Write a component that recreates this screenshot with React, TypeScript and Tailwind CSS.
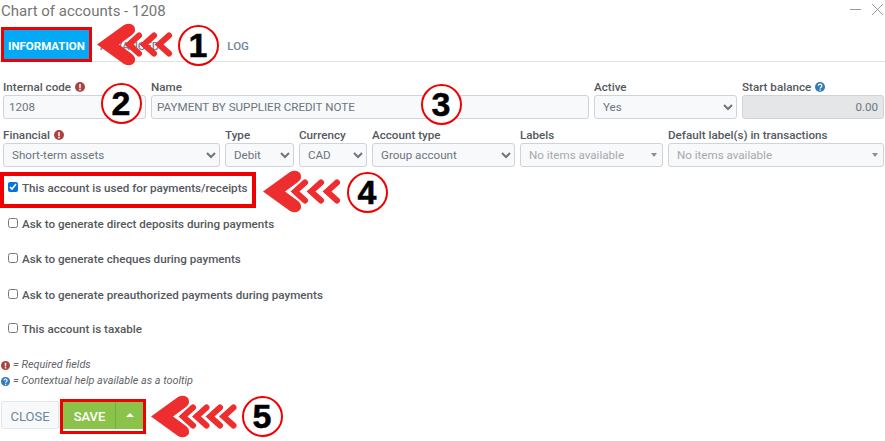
import React from "react";

const Excl = ({ c = "" }: { c?: string }) => (
  <svg viewBox="0 0 16 16" className={`inline-block w-[10px] h-[10px] ${c}`}>
    <circle cx="8" cy="8" r="8" fill="#a94442" />
    <rect x="6.8" y="3" width="2.4" height="6.6" rx="1" fill="#fff" />
    <circle cx="8" cy="12" r="1.5" fill="#fff" />
  </svg>
);
const Help = ({ c = "" }: { c?: string }) => (
  <svg viewBox="0 0 16 16" className={`inline-block w-[10px] h-[10px] ${c}`}>
    <circle cx="8" cy="8" r="8" fill="#337ab7" />
    <path d="M5.3 6.1a2.8 2.6 0 1 1 4.3 2.2c-1 .6-1.4 1-1.4 1.9" fill="none" stroke="#fff" strokeWidth="2" />
    <circle cx="8.2" cy="12.8" r="1.3" fill="#fff" />
  </svg>
);

const Label = ({ children }: { children: React.ReactNode }) => (
  <div className="h-[17px] pt-[1px] text-[11.65px] leading-[15px] text-[#55595e] font-medium whitespace-nowrap flex items-center gap-[4px]">
    {children}
  </div>
);

const fieldCls =
  "block w-full h-[24px] rounded-[3px] border border-[#ced4da] bg-[#f8f9fa] text-[11.6px] text-[#6c757d] outline-none";

const Sel = ({ label, w, value, icon }: { label: string; w: string; value: string; icon?: boolean }) => (
  <div className={`${w} shrink-0 flex flex-col`}>
    <Label>
      {label}
      {icon && <Excl />}
    </Label>
    <select defaultValue={value} className={`${fieldCls} pl-[4px]`}>
      <option>{value}</option>
    </select>
  </div>
);

const Empty = ({ label, w }: { label: string; w: string }) => (
  <div className={`${w} shrink-0 flex flex-col`}>
    <Label>{label}</Label>
    <div className={`${fieldCls} flex items-center justify-between pl-[8px] pr-[5px] text-[#a4a9ae]`}>
      <span className="translate-y-[1px]">No items available</span>
      <span className="w-0 h-0 border-x-[3.5px] border-x-transparent border-t-[4px] border-t-[#8a8f94]" />
    </div>
  </div>
);

const Check = ({ label, checked, h }: { label: string; checked?: boolean; h: string }) => (
  <label className={`flex items-center gap-[4px] ${h} pl-[8px] text-[11.65px] text-[#55595e] font-medium`}>
    <input type="checkbox" defaultChecked={checked} className="w-[10px] h-[10px] m-0 -translate-y-[1px] accent-[#0a6fd8]" />
    <span className="translate-y-[1px]">{label}</span>
  </label>
);

const Arrow = ({ x, y, w, n, s }: { x: number; y: number; w: number; n: number; s: number }) => (
  <svg
    className="absolute"
    style={{ left: x, top: y }}
    width={w}
    height={46}
    viewBox={`0 0 ${w} 46`}
    fill="none"
  >
    {Array.from({ length: n }).map((_, i) => {
      const t = 32 + i * s;
      return (
        <path
          key={i}
          d={`M${t + 10} 13.5 L${t} 22.5 L${t + 10} 31.5`}
          stroke="#ee2e2e"
          strokeWidth="6"
          strokeLinecap="round"
          strokeLinejoin="miter"
        />
      );
    })}
    <path
      d="M0 22.5 L27 3 Q33 0 37 4 Q40 9 35 13 L22 22.5 L35 32 Q40 36 37 41 Q33 45 27 42 Z"
      fill="#ee2e2e"
    />
  </svg>
);

const Circle = ({ x, y, n }: { x: number; y: number; n: string }) => (
  <div
    className="absolute w-[41px] h-[41px] rounded-full bg-white border-[2px] border-[#f00000] flex items-center justify-center text-[34px] font-bold text-black leading-none [-webkit-text-stroke:0.5px_black] [font-family:'Liberation_Sans',sans-serif]"
    style={{ left: x - 20.5, top: y - 20.5 }}
  >
    {n}
  </div>
);

const RedBox = ({ x, y, w, h, b }: { x: number; y: number; w: number; h: number; b: number }) => (
  <div
    className="absolute border-solid border-[#f00000]"
    style={{ left: x, top: y, width: w, height: h, borderWidth: b }}
  />
);

export default function App() {
  return (
    <div className="relative w-[885px] h-[441px] overflow-hidden bg-white [font-family:Roboto,sans-serif]">
      <div className="flex items-center justify-between h-[21px] pl-[1px] pr-[2px]">
        <div className="text-[15px] leading-[21px] pt-[1px] text-[#757575]">Chart of accounts - 1208</div>
        <div className="flex items-center gap-[11px] pb-[3px]">
          <span className="w-[11px] h-[1px] bg-[#9a9a9a]" />
          <svg width="11" height="11" viewBox="0 0 11 11" stroke="#9a9a9a" strokeWidth="1">
            <path d="M0 0 L11 11 M11 0 L0 11" />
          </svg>
        </div>
      </div>

      <div className="mt-[9px] flex items-center h-[32px] border-b border-[#dee2e6] pl-[4px] pb-[3px] text-[11.5px] font-medium">
        <div className="w-[85px] h-[29px] bg-[#03a9f4] text-white font-bold flex items-center justify-center pt-[6px]">
          INFORMATION
        </div>
        <div className="ml-[11px] pt-[6px] text-[#6c8799]">ADVANCED</div>
        <div className="ml-[68px] pt-[6px] text-[#6c8799]">LOG</div>
      </div>

      <div className="mt-[16px] px-[3px] flex gap-[5px]">
        <div className="w-[143px] shrink-0 flex flex-col">
          <Label>
            Internal code <Excl />
          </Label>
          <input readOnly value="1208" className={`${fieldCls} px-[5px]`} />
        </div>
        <div className="w-[438px] shrink-0 flex flex-col">
          <Label>Name</Label>
          <input readOnly value="PAYMENT BY SUPPLIER CREDIT NOTE" className={`${fieldCls} px-[5px]`} />
        </div>
        <Sel label="Active" w="w-[143px]" value="Yes" />
        <div className="w-[142px] shrink-0 flex flex-col">
          <Label>
            Start balance <Help />
          </Label>
          <input readOnly value="0.00" className={`${fieldCls} px-[5px] text-right !bg-[#e5e6e8]`} />
        </div>
      </div>

      <div className="mt-[7px] px-[3px] flex gap-[5px]">
        <Sel label="Financial" icon w="w-[217px]" value="Short-term assets" />
        <Sel label="Type" w="w-[69px]" value="Debit" />
        <Sel label="Currency" w="w-[68px]" value="CAD" />
        <Sel label="Account type" w="w-[143px]" value="Group account" />
        <Empty label="Labels" w="w-[143px]" />
        <Empty label="Default label(s) in transactions" w="w-[216px]" />
      </div>

      <div className="mt-[4px] flex flex-col">
        <Check checked h="h-[34px]" label="This account is used for payments/receipts" />
        <Check h="h-[37px]" label="Ask to generate direct deposits during payments" />
        <Check h="h-[34px]" label="Ask to generate cheques during payments" />
        <Check h="h-[37px]" label="Ask to generate preauthorized payments during payments" />
        <Check h="h-[32px]" label="This account is taxable" />
      </div>

      <div className="mt-[12px] pl-[1px] text-[10.85px] leading-[16px] italic text-[#5f6468]">
        <div className="flex items-center gap-[3px]">
          <Excl c="!w-[9px] !h-[9px]" /> = Required fields
        </div>
        <div className="flex items-center gap-[3px]">
          <Help c="!w-[9px] !h-[9px]" /> = Contextual help available as a tooltip
        </div>
      </div>

      <div className="mt-[12px] pl-[1px] flex gap-[3px] text-[13px]">
        <div className="w-[58px] h-[28px] pt-[3px] rounded-[2px] border border-[#e3e7ea] bg-[#f8f9fa] text-[#6c8799] flex items-center justify-center">
          CLOSE
        </div>
        <div className="flex h-[28px] bg-[#8bc34a] text-white">
          <div className="w-[53px] pt-[3px] pl-[2px] font-medium flex items-center justify-center">SAVE</div>
          <div className="w-[28px] border-l border-[#6db33f] flex items-center justify-center">
            <span className="w-0 h-0 border-x-[4px] border-x-transparent border-b-[4px] border-b-white" />
          </div>
        </div>
      </div>

      <RedBox x={1} y={27} w={91} h={35} b={3} />
      <RedBox x={0} y={172} w={256} h={36} b={4} />
      <RedBox x={60} y={399} w={86} h={35} b={3} />

      <Arrow x={97} y={22} w={80} n={3} s={15} />
      <Arrow x={263} y={169} w={82} n={3} s={16} />
      <Arrow x={151} y={394} w={88} n={4} s={13.5} />

      <Circle x={198} y={45} n="1" />
      <Circle x={121} y={103} n="2" />
      <Circle x={441} y={104} n="3" />
      <Circle x={367} y={192} n="4" />
      <Circle x={262} y={416} n="5" />
    </div>
  );
}
